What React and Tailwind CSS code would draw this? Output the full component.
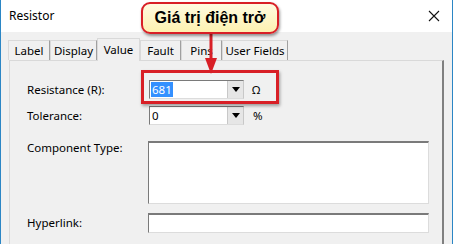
import React from 'react';

const font = { fontFamily: '"Noto Sans", "Open Sans", sans-serif' };

const Combo = ({ value, selected }) => (
  <div className="flex h-[19px] w-[95px] border border-[#7a7a7a] border-r-[#c8c8c8] border-b-[#dcdcdc] bg-white">
    <div className="flex flex-1 items-center pl-[1px] text-[11.5px] leading-none">
      {selected ? (
        <span className="bg-[#3390ff] px-[1px] py-[2px] text-white">{value}</span>
      ) : (
        <span className="px-[1px]">{value}</span>
      )}
    </div>
    <div className="flex w-[16px] items-center justify-center border-l border-[#c8c8c8] bg-[#e6e6e6]">
      <svg width="8" height="5" viewBox="0 0 8 5">
        <path d="M0 0 L8 0 L4 5 Z" fill="#000" />
      </svg>
    </div>
  </div>
);

const tabs = [
  { t: 'Label', w: 'w-[42px]' },
  { t: 'Display', w: 'w-[47px]' },
  { t: 'Value', w: 'w-[43px]' },
  { t: 'Fault', w: 'w-[41px]' },
  { t: 'Pins', w: 'w-[41px]' },
  { t: 'User Fields', w: 'w-[66px]' },
];

export default function App() {
  return (
    <div
      className="relative h-[244px] w-[453px] overflow-hidden border-x border-[#2b86c5] bg-[#f0f0f0] text-[#000]"
      style={font}
    >
      {/* title bar */}
      <div className="flex h-[32px] items-center justify-between bg-white pl-[8px] pr-[12px]">
        <span className="text-[12px]">Resistor</span>
        <svg width="12" height="12" viewBox="0 0 12 12">
          <path d="M1 1 L11 11 M11 1 L1 11" stroke="#111" strokeWidth="1.1" />
        </svg>
      </div>

      {/* tabs */}
      <div className="flex h-[28px] items-end pl-[7px]">
        {tabs.map(({ t, w }) =>
          t === 'Value' ? (
            <div
              key={t}
              className={`relative z-10 mb-[-1px] flex h-[23px] items-start justify-center border border-b-0 border-[#d9d9d9] bg-[#f0f0f0] pt-[2px] text-[11.5px] ${w}`}
            >
              {t}
            </div>
          ) : (
            <div
              key={t}
              className={`flex h-[20px] items-center justify-center border border-b-0 border-[#d9d9d9] border-r-[#a0a0a0] bg-[#f0f0f0] text-[11.5px] ${w}`}
            >
              {t}
            </div>
          )
        )}
      </div>

      {/* panel */}
      <div className="mx-[8px] h-[190px] border border-r-2 border-[#d9d9d9] border-r-[#808080] pl-[17px] pt-[19px]">
        <div className="flex items-center">
          <span className="w-[122px] text-[11.5px]">Resistance (R):</span>
          <Combo value="681" selected />
          <span className="ml-[8px] text-[11.5px]">Ω</span>
        </div>
        <div className="mt-[7px] flex items-center">
          <span className="w-[122px] text-[11.5px]">Tolerance:</span>
          <Combo value="0" />
          <span className="ml-[9px] text-[11.5px]">%</span>
        </div>
        <div className="mt-[16px] flex items-start">
          <span className="-mt-[2px] w-[121px] text-[11.5px]">Component Type:</span>
          <div className="h-[63px] w-[281px] border border-t-2 border-[#7a7a7a] border-r-[#dcdcdc] border-b-[#dcdcdc] bg-white" />
        </div>
        <div className="mt-[9px] flex items-center">
          <span className="w-[121px] text-[11.5px]">Hyperlink:</span>
          <div className="h-[20px] w-[281px] border border-t-2 border-[#7a7a7a] border-r-[#dcdcdc] border-b-[#dcdcdc] bg-white" />
        </div>
      </div>

      {/* red highlight box */}
      <div className="absolute left-[140px] top-[70px] h-[34px] w-[138px] border-[3px] border-[#d81f26] shadow-[1px_2px_3px_rgba(0,0,0,0.35)]" />

      {/* arrow */}
      <svg className="absolute left-[200px] top-[30px]" width="20" height="46" viewBox="0 0 20 46">
        <path d="M10 0 L10 30" stroke="#d81f26" strokeWidth="3" />
        <path d="M4 28 L16 28 L10 44 Z" fill="#d81f26" />
      </svg>

      {/* callout */}
      <div className="absolute left-[140px] top-[2px] flex h-[32px] w-[138px] items-center justify-center rounded-[9px] border-2 border-[#d81f26] bg-gradient-to-b from-[#fffbe0] to-[#fdf1b0] shadow-[1px_2px_3px_rgba(0,0,0,0.4)]">
        <span
          className="text-[16px] font-bold text-black"
          style={{ fontFamily: '"Liberation Sans", Arial, sans-serif' }}
        >
          Giá trị điện trở
        </span>
      </div>
    </div>
  );
}
